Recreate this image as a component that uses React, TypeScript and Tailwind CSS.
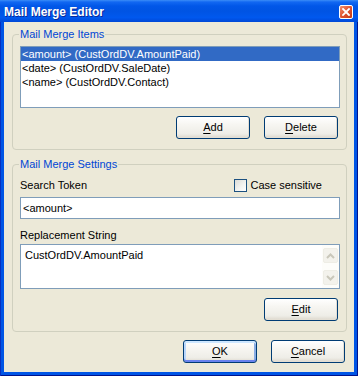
import React from "react";

function XPButton({
  letter,
  rest,
  isDefault = false,
}: {
  letter: string;
  rest: string;
  isDefault?: boolean;
}) {
  return (
    <div
      className={
        "w-[74px] h-[23px] rounded-[3px] border border-[#003C74] flex items-center justify-center bg-[linear-gradient(to_bottom,#FFFFFF_0%,#F7F6F2_35%,#EEEDE7_80%,#DCD7CC_100%)] " +
        (isDefault
          ? "shadow-[inset_0_2px_0_#CEE7FF,inset_0_-2px_0_#6982EE,inset_2px_0_0_#B8D6FB,inset_-2px_0_0_#89ADE4]"
          : "shadow-[inset_-1px_-1px_0_#E3DED3]")
      }
    >
      <span className="leading-[13px]">
        <span className="underline underline-offset-[2px]">{letter}</span>
        {rest}
      </span>
    </div>
  );
}

function Chevron({ up }: { up: boolean }) {
  return (
    <svg width="9" height="6" viewBox="0 0 9 6">
      <path
        d={up ? "M1 5 L4.5 1.5 L8 5" : "M1 1 L4.5 4.5 L8 1"}
        fill="none"
        stroke="#C9C7BA"
        strokeWidth="2"
      />
    </svg>
  );
}

function ScrollBtn({ up }: { up: boolean }) {
  return (
    <div className="w-[15px] h-[15px] rounded-[2px] border border-[#EEEDE5] bg-[#F3F2EC] flex items-center justify-center">
      <Chevron up={up} />
    </div>
  );
}

export default function App() {
  return (
    <div className="w-[358px] h-[376px] flex flex-col bg-[#0055E5] shadow-[inset_1px_0_#0830C0,inset_-1px_0_#00138C,inset_0_-1px_#00138C] font-['Liberation_Sans',Arial,sans-serif] text-[11px] text-black overflow-hidden">
      {/* Title bar */}
      <div className="h-[22px] shrink-0 flex items-center pl-[4px] pr-[5px] pt-[1px] bg-[linear-gradient(to_bottom,#3B8DF7_0px,#1268F2_2px,#0157E8_6px,#0054E3_50%,#0058EE_80%,#0048D6_100%)]">
        <span className="text-white font-bold text-[12px] leading-[14px] [text-shadow:1px_1px_#0A2A9A]">
          Mail Merge Editor
        </span>
        <div className="ml-auto mt-[1px] w-[14px] h-[14px] rounded-[2px] border border-white bg-[linear-gradient(135deg,#F0906E_0%,#E0532F_50%,#C23A18_100%)] flex items-center justify-center">
          <svg width="8" height="8" viewBox="0 0 8 8">
            <path d="M1 1 L7 7 M7 1 L1 7" stroke="#FFFFFF" strokeWidth="1.8" strokeLinecap="square" />
          </svg>
        </div>
      </div>

      {/* Body */}
      <div className="flex-1 mx-[4px] mb-[4px] bg-[#ECE9D8] flex flex-col pl-[8px] pr-[7px]">
        {/* Group 1 */}
        <fieldset className="mt-[5px] border border-[#D0D0BF] rounded-[4px] p-0 m-0 min-w-0">
          <legend className="ml-[6px] px-[1px] leading-[14px] text-[#0046D5]">Mail Merge Items</legend>
          <div className="pt-[5px] pl-[7px] pr-[6px] pb-[10px] flex flex-col">
            <div className="h-[62px] border border-[#7F9DB9] bg-white flex flex-col">
              <div className="h-[14px] leading-[14px] pl-[1px] bg-[#316AC5] text-white">
                &lt;amount&gt; (CustOrdDV.AmountPaid)
              </div>
              <div className="h-[14px] leading-[14px] pl-[1px]">&lt;date&gt; (CustOrdDV.SaleDate)</div>
              <div className="h-[14px] leading-[14px] pl-[1px]">&lt;name&gt; (CustOrdDV.Contact)</div>
            </div>
            <div className="mt-[8px] flex justify-end gap-[14px] pr-[2px]">
              <XPButton letter="A" rest="dd" />
              <XPButton letter="D" rest="elete" />
            </div>
          </div>
        </fieldset>

        {/* Group 2 */}
        <fieldset className="mt-[7px] border border-[#D0D0BF] rounded-[4px] p-0 m-0 min-w-0">
          <legend className="ml-[6px] px-[1px] leading-[14px] text-[#0046D5]">Mail Merge Settings</legend>
          <div className="pt-[8px] pl-[7px] pr-[6px] pb-[10px] flex flex-col">
            <div className="h-[13px] flex items-center">
              <span className="leading-[13px]">Search Token</span>
              <div className="ml-auto w-[13px] h-[13px] border border-[#1C5180] bg-[linear-gradient(135deg,#DCDCD7_0%,#F4F4F1_60%,#FFFFFF_100%)]" />
              <span className="ml-[3px] mr-[18px] leading-[13px]">Case sensitive</span>
            </div>
            <div className="mt-[5px] h-[22px] border border-[#7F9DB9] bg-white flex items-center pl-[2px]">
              &lt;amount&gt;
            </div>
            <div className="mt-[9px] leading-[14px]">Replacement String</div>
            <div className="mt-[2px] h-[45px] border border-[#7F9DB9] bg-white flex">
              <div className="flex-1 pl-[4px] pt-[3px] leading-[14px]">CustOrdDV.AmountPaid</div>
              <div className="w-[17px] flex flex-col items-center justify-between py-[3px] bg-[#FDFDFA]">
                <ScrollBtn up={true} />
                <ScrollBtn up={false} />
              </div>
            </div>
            <div className="mt-[9px] flex justify-end pr-[2px]">
              <XPButton letter="E" rest="dit" />
            </div>
          </div>
        </fieldset>

        {/* Bottom buttons */}
        <div className="mt-[8px] flex justify-end gap-[14px] pr-[2px]">
          <XPButton letter="O" rest="K" isDefault={true} />
          <XPButton letter="C" rest="ancel" />
        </div>
      </div>
    </div>
  );
}
